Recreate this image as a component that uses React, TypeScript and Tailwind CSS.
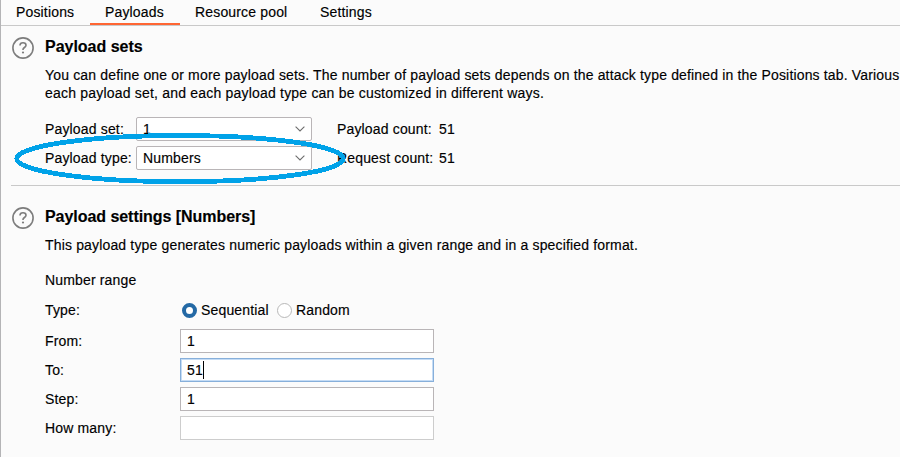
import type { ReactNode } from "react";

function HelpIcon() {
  return (
    <svg width="22" height="22" viewBox="0 0 22 22" fill="none" className="shrink-0">
      <circle cx="11" cy="11" r="10.1" stroke="#7d7d7d" strokeWidth="1.6" />
      <path d="M8 8.4C8 6.8 9.3 5.8 11 5.8C12.8 5.8 14 6.8 14 8.3C14 10.4 11 10.6 11 12.6V13" stroke="#7d7d7d" strokeWidth="1.6" />
      <circle cx="11" cy="15.5" r="1.1" fill="#7d7d7d" />
    </svg>
  );
}

function Chevron() {
  return (
    <svg width="10" height="6" viewBox="0 0 10 6" fill="none" className="mr-[6px]">
      <path d="M0.6 0.7L5 5L9.4 0.7" stroke="#6e6e6e" strokeWidth="1.1" />
    </svg>
  );
}

function Select({ children }: { children: ReactNode }) {
  return (
    <div className="flex h-6 w-[176px] items-center justify-between rounded-[2px] border border-[#b9b5b7] bg-white pl-[6px]">
      <span>{children}</span>
      <Chevron />
    </div>
  );
}

function Field({ label, children, box }: { label: string; children?: ReactNode; box: string }) {
  return (
    <div className="flex h-6 items-center">
      <span className="w-[135px]">{label}</span>
      <div className={`flex h-6 w-[254px] items-center border bg-white pl-[6px] ${box}`}>{children}</div>
    </div>
  );
}

export default function App() {
  return (
    <div className="relative h-[457px] w-[900px] overflow-hidden border-l border-[#b4b4b6] bg-[#fbfbfb] font-['Liberation_Sans',Arial,sans-serif] text-[14px] leading-[18px] tracking-[0.16px] whitespace-nowrap text-black [-webkit-text-stroke:0.15px_black]">
      <nav className="flex h-[26px] border-b border-[#c9c9c9] pt-[3px]">
        <span className="w-[89px] pl-[15px]">Positions</span>
        <span className="h-[22px] w-[90px] border-b-2 border-[#ff6633] pl-[15px]">Payloads</span>
        <span className="w-[125px] pl-[15px]">Resource pool</span>
        <span className="pl-[15px]">Settings</span>
      </nav>

      <section className="flex h-[159px] pt-[11px] pl-[11px]">
        <HelpIcon />
        <div className="pl-[11px]">
          <h2 className="text-[16px] leading-5 font-bold tracking-[-0.02px]">Payload sets</h2>
          <p className="mt-[9px]">
            You can define one or more payload sets. The number of payload sets depends on the attack type defined in the Positions tab. Various
            <br />
            <span className="tracking-[0.2px]">each payload set, and each payload type can be customized in different ways.</span>
          </p>
          <div className="mt-[15px] flex flex-col gap-[5px]">
            <div className="flex items-center">
              <span className="w-[91px]">Payload set:</span>
              <Select>1</Select>
              <span className="ml-[25px] w-[102px]">Payload count:</span>
              <span>51</span>
            </div>
            <div className="flex items-center">
              <span className="w-[91px]">Payload type:</span>
              <Select>Numbers</Select>
              <span className="ml-[25px] w-[102px]">Request count:</span>
              <span>51</span>
            </div>
          </div>
        </div>
      </section>

      <hr className="ml-[10px] border-[#c9c9c9]" />

      <section className="flex pt-[21px] pl-[11px]">
        <HelpIcon />
        <div className="pl-[11px]">
          <h2 className="text-[16px] leading-5 font-bold tracking-[-0.05px]">Payload settings [Numbers]</h2>
          <p className="mt-[9px]">This payload type generates numeric payloads within a given range and in a specified format.</p>
          <p className="mt-[17px]">Number range</p>
          <div className="mt-[12px] flex h-[18px] items-center">
            <span className="w-[137px]">Type:</span>
            <span className="h-[15px] w-[15px] rounded-full border-4 border-[#2469a5] bg-white" />
            <span className="ml-[4px] w-[76px]">Sequential</span>
            <span className="h-[15px] w-[15px] rounded-full border border-[#b8b8b8] bg-white" />
            <span className="ml-[4px]">Random</span>
          </div>
          <div className="mt-[10px] flex flex-col gap-[5px]">
            <Field label="From:" box="border-[#b9b5b7]">1</Field>
            <Field label="To:" box="border-[#87afda] shadow-[inset_0_0_0_1px_#c5dcf5]">
              51<span className="h-[18px] w-px bg-black" />
            </Field>
            <Field label="Step:" box="border-[#b9b5b7]">1</Field>
            <Field label="How many:" box="border-[#cdcdcd]" />
          </div>
        </div>
      </section>

      <svg className="absolute top-[130px] left-[12px]" width="336" height="58" viewBox="13 130 336 58" fill="none">
        <ellipse cx="180" cy="158.6" rx="163.3" ry="23.1" stroke="#00a2e8" strokeWidth="4.8" shapeRendering="crispEdges" />
      </svg>
    </div>
  );
}
